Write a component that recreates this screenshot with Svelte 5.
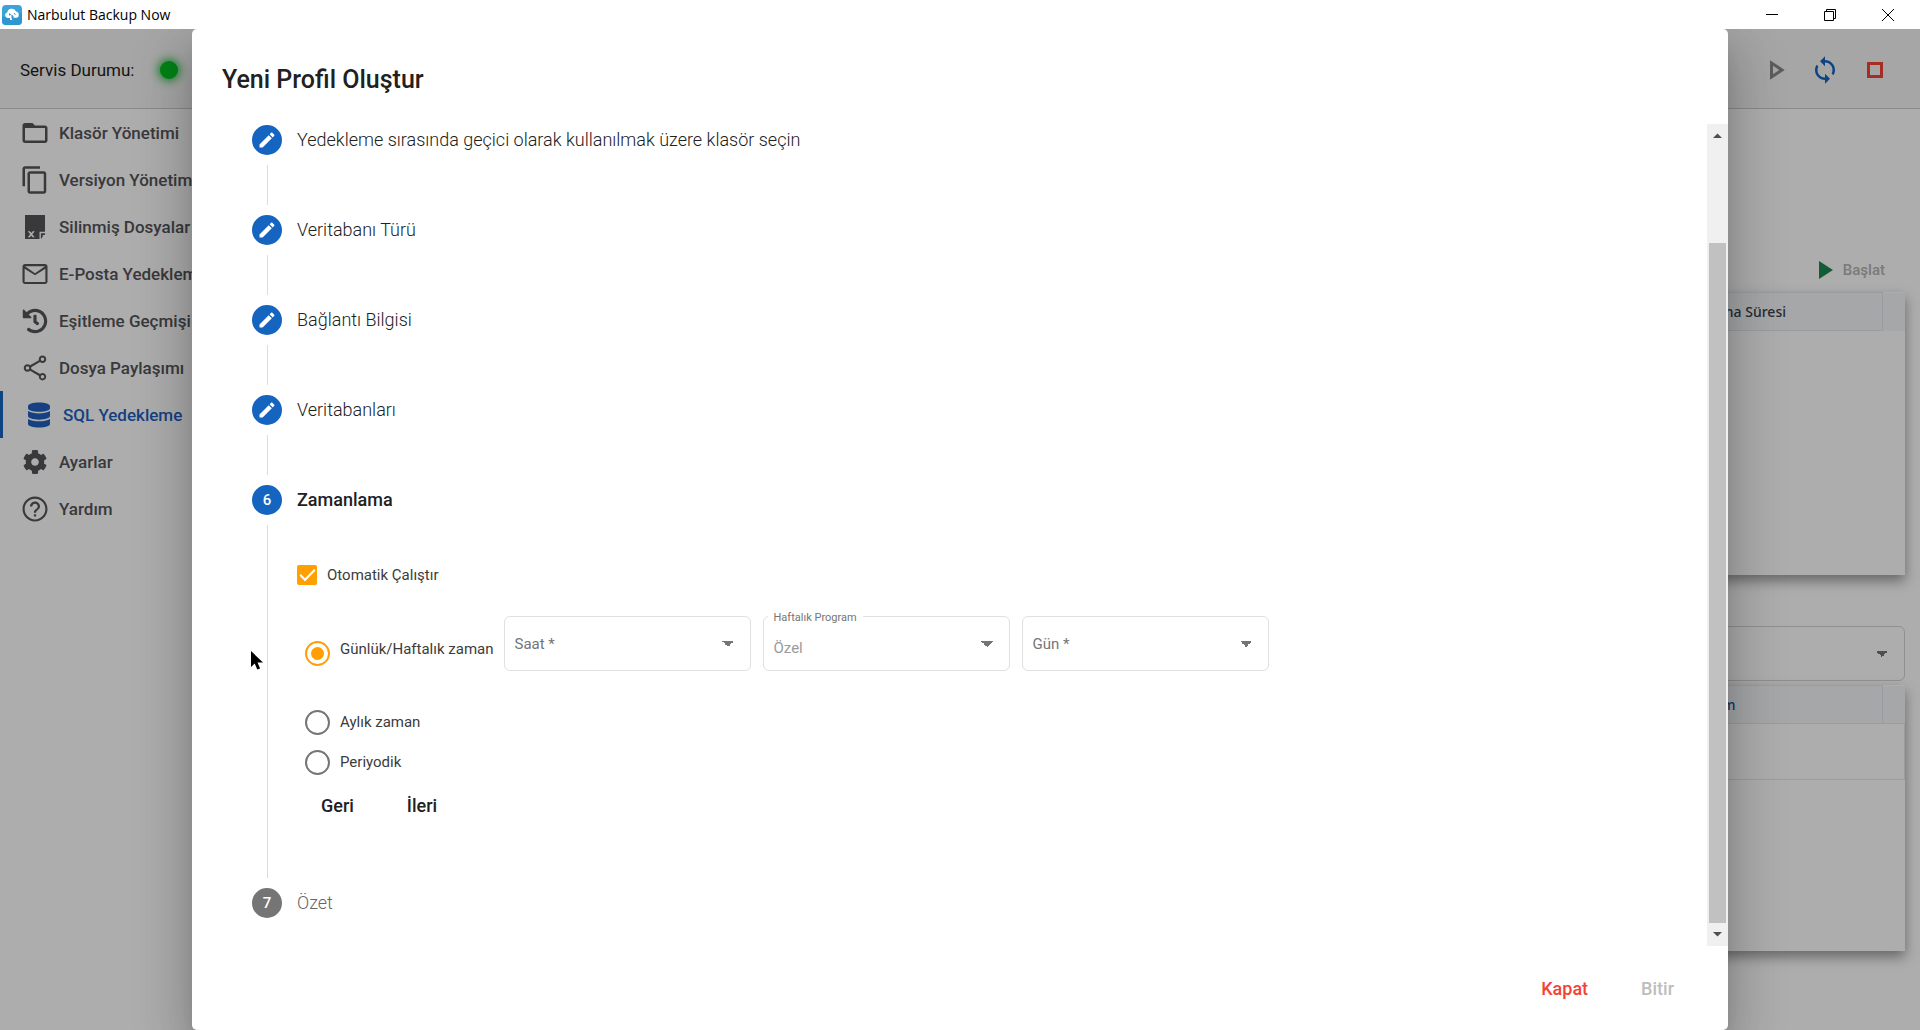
<script lang="ts">
	const menu = [
		{
			label: 'Klasör Yönetimi',
			viewBox: '0 0 24 24',
			path: 'M20 6h-8l-2-2H4c-1.1 0-2 .9-2 2v12c0 1.1.9 2 2 2h16c1.1 0 2-.9 2-2V8c0-1.1-.9-2-2-2zm0 12H4V8h16v10z'
		},
		{
			label: 'Versiyon Yönetimi',
			viewBox: '0 0 24 24',
			path: 'M16 1H4c-1.1 0-2 .9-2 2v14h2V3h12V1zm3 4H8c-1.1 0-2 .9-2 2v14c0 1.1.9 2 2 2h11c1.1 0 2-.9 2-2V7c0-1.1-.9-2-2-2zm0 16H8V7h11v14z'
		},
		{
			label: 'Silinmiş Dosyalar',
			viewBox: '0 0 24 24',
			path: 'M4 2.4h16v13.400h-4.400v5.800H4zM16.700 21.600V17H20v1.400h-1.800v1.400L16.700 21.600zM6.200 15.400l2 2.400-2 2.400h1.700l1.100-1.400 1.100 1.400h1.700l-2-2.400 2-2.400h-1.700L9 16.800l-1.100-1.400z'
		},
		{
			label: 'E-Posta Yedekleme',
			viewBox: '0 0 24 24',
			path: 'M20 4H4c-1.1 0-2 .9-2 2v12c0 1.1.9 2 2 2h16c1.1 0 2-.9 2-2V6c0-1.1-.9-2-2-2zm.3 14.300H3.700V7.700l8.300 5.300 8.300-5.300v10.600zM12 11.300 4 5.700h16L12 11.300z'
		},
		{
			label: 'Eşitleme Geçmişi',
			viewBox: '-48 -48 608 608',
			path: 'M504 255.531c.253 136.64-111.18 248.372-247.82 248.468-59.015.042-113.223-20.53-155.822-54.911-11.077-8.94-11.905-25.541-1.839-35.607l11.267-11.267c8.609-8.609 22.353-9.551 31.891-1.984C173.062 425.135 212.781 440 256 440c101.705 0 184-82.311 184-184 0-101.705-82.311-184-184-184-48.814 0-93.149 18.969-126.068 49.932l50.754 50.754c10.08 10.08 2.941 27.314-11.313 27.314H24c-8.837 0-16-7.163-16-16V38.627c0-14.254 17.234-21.393 27.314-11.314l49.372 49.372C129.209 34.136 189.552 8 256 8c136.81 0 247.747 110.78 248 247.531zm-180.912 78.784l9.823-12.63c8.138-10.463 6.253-25.542-4.21-33.679L288 256.349V152c0-13.255-10.745-24-24-24h-16c-13.255 0-24 10.745-24 24v135.651l65.409 50.874c10.463 8.137 25.541 6.253 33.679-4.21z'
		},
		{
			label: 'Dosya Paylaşımı',
			viewBox: '0 0 24 24',
			path: 'M18 16.080c-.76 0-1.440.3-1.960.77L8.910 12.700c.05-.23.09-.46.09-.7s-.04-.47-.09-.7l7.050-4.110c.54.5 1.250.81 2.040.81 1.660 0 3-1.340 3-3s-1.340-3-3-3-3 1.340-3 3c0 .24.04.47.09.7L8.040 9.810C7.500 9.310 6.790 9 6 9c-1.660 0-3 1.340-3 3s1.340 3 3 3c.79 0 1.500-.31 2.040-.81l7.120 4.160c-.05.21-.08.43-.08.65 0 1.610 1.310 2.920 2.920 2.920s2.920-1.310 2.920-2.920-1.310-2.920-2.920-2.920zM18 3.600a1.400 1.400 0 1 1 0 2.800 1.400 1.400 0 0 1 0-2.800zM6 13.400a1.400 1.400 0 1 1 0-2.800 1.400 1.400 0 0 1 0 2.800zm12 7a1.400 1.400 0 1 1 0-2.800 1.400 1.400 0 0 1 0 2.800z'
		},
		{
			label: 'SQL Yedekleme',
			active: true,
			viewBox: '-82 -50 612 612',
			path: 'M448 73.143v45.714C448 159.143 347.667 192 224 192S0 159.143 0 118.857V73.143C0 32.857 100.333 0 224 0s224 32.857 224 73.143zM448 176v102.857C448 319.143 347.667 352 224 352S0 319.143 0 278.857V176c48.125 33.143 136.208 48.572 224 48.572S399.874 209.143 448 176zm0 160v102.857C448 479.143 347.667 512 224 512S0 479.143 0 438.857V336c48.125 33.143 136.208 48.572 224 48.572S399.874 369.143 448 336z'
		},
		{
			label: 'Ayarlar',
			viewBox: '-56 -56 624 624',
			path: 'M487.400 315.700l-42.600-24.600c4.300-23.200 4.300-47 0-70.200l42.600-24.600c4.900-2.800 7.100-8.600 5.500-14-11.100-35.600-30-67.800-54.700-94.600-3.800-4.100-10-5.100-14.800-2.300L380.800 110c-17.900-15.400-38.500-27.300-60.800-35.100V25.800c0-5.600-3.900-10.500-9.400-11.700-36.700-8.200-74.300-7.800-109.200 0-5.500 1.200-9.400 6.100-9.400 11.700V75c-22.200 7.900-42.800 19.800-60.800 35.100L88.700 85.500c-4.900-2.800-11-1.900-14.800 2.300-24.700 26.700-43.600 58.900-54.700 94.600-1.700 5.400.6 11.200 5.500 14L67.300 221c-4.300 23.200-4.300 47 0 70.200l-42.600 24.600c-4.900 2.800-7.100 8.600-5.500 14 11.100 35.600 30 67.800 54.700 94.600 3.800 4.100 10 5.100 14.800 2.300l42.600-24.600c17.900 15.400 38.500 27.300 60.800 35.100v49.200c0 5.600 3.900 10.500 9.400 11.700 36.700 8.200 74.300 7.800 109.200 0 5.500-1.200 9.400-6.100 9.400-11.700v-49.200c22.200-7.900 42.800-19.800 60.800-35.100l42.600 24.600c4.900 2.800 11 1.900 14.800-2.300 24.700-26.700 43.600-58.900 54.700-94.600 1.500-5.500-.7-11.300-5.600-14.100zM256 336c-44.100 0-80-35.900-80-80s35.900-80 80-80 80 35.900 80 80-35.900 80-80 80z'
		},
		{
			label: 'Yardım',
			viewBox: '0 0 24 24',
			path: 'M11.100 18h1.800v-1.800h-1.800V18zM12 2C6.480 2 2 6.480 2 12s4.480 10 10 10 10-4.480 10-10S17.520 2 12 2zm0 18.300c-4.600 0-8.300-3.700-8.300-8.300S7.400 3.700 12 3.700s8.300 3.700 8.300 8.300-3.700 8.300-8.300 8.300zM12 6c-2.210 0-4 1.790-4 4h1.800c0-1.200 1-2.200 2.200-2.200s2.200 1 2.200 2.200c0 2-3.100 1.900-3.100 5h1.800c0-2.250 3.100-2.500 3.100-5 0-2.210-1.790-4-4-4z'
		}
	];

	const doneSteps = [
		'Yedekleme sırasında geçici olarak kullanılmak üzere klasör seçin',
		'Veritabanı Türü',
		'Bağlantı Bilgisi',
		'Veritabanları'
	];

	let autoRun = $state(true);
	let schedule = $state('daily');
</script>

{#snippet radio(value: string, label: string)}
	<label class="radio">
		<input type="radio" name="schedule" {value} bind:group={schedule} />
		<span>{label}</span>
	</label>
{/snippet}

<div class="window">
	<div class="titlebar">
		<svg class="logo" viewBox="0 0 20 20" aria-hidden="true">
			<rect width="20" height="20" rx="4" fill="#3ba3d8" />
			<path d="M0 12 20 8v8a4 4 0 0 1-4 4H4a4 4 0 0 1-4-4z" fill="#2f97cf" />
			<path d="M5.500 13a2.800 2.800 0 0 1-.3-5.500 4.800 4.800 0 0 1 9-1 3.300 3.300 0 0 1 .6 6.300h-3.300V11l-2-1.500v4l1 1.500H8v-2z" fill="#fff" />
			<path d="M7.500 10.500v-2l2 2M12 8l1.500 2" fill="none" stroke="#3ba3d8" />
		</svg>
		<span class="app-name">Narbulut Backup Now</span>
		<button aria-label="Küçült">
			<svg viewBox="0 0 12 12"><path d="M0 5.500h12" /></svg>
		</button>
		<button aria-label="Geri yükle">
			<svg viewBox="0 0 12 12"><path d="M.5 2.500h9v9h-9zM2.500 2.500v-2h9v9h-2" /></svg>
		</button>
		<button aria-label="Kapat">
			<svg viewBox="0 0 12 12"><path d="M0 0l12 12M12 0 0 12" /></svg>
		</button>
	</div>

	<header>
		<span>Servis Durumu:</span>
		<i class="status"></i>
		<div class="tools">
			<button aria-label="Başlat">
				<svg viewBox="0 0 30 30"><path d="M11.500 8v14L22 15z" fill="none" stroke="#8a8a8a" stroke-width="3" /></svg>
			</button>
			<button aria-label="Yenile">
				<svg viewBox="0 0 24 24">
					<path fill="#1565c0" d="M12 4V1L8 5l4 4V6c3.310 0 6 2.690 6 6 0 1.010-.25 1.970-.7 2.800l1.460 1.460C19.540 15.030 20 13.570 20 12c0-4.420-3.580-8-8-8zm0 14c-3.310 0-6-2.690-6-6 0-1.010.25-1.970.7-2.800L5.240 7.740C4.460 8.970 4 10.430 4 12c0 4.420 3.580 8 8 8v3l4-4-4-4v3z" />
				</svg>
			</button>
			<button aria-label="Durdur">
				<svg viewBox="0 0 30 30"><path d="M8.500 8.500h13v13h-13z" fill="none" stroke="#f44336" stroke-width="3" /></svg>
			</button>
		</div>
	</header>

	<div class="page">
		<nav>
			{#each menu as item}
				<a href="#top" class:active={item.active}>
					<svg viewBox={item.viewBox}><path d={item.path} fill-rule="evenodd" /></svg>
					{item.label}
				</a>
			{/each}
		</nav>

		<main>
			<button class="start" disabled>
				<svg viewBox="0 0 14 18"><path d="M0 0v18l14-9z" /></svg>
				Başlat
			</button>
			<div class="card">
				<table>
					<thead>
						<tr><th>Çalışma Süresi</th><td></td></tr>
					</thead>
				</table>
			</div>
			<select class="filter" aria-label="Profil"><option></option></select>
			<div class="card second">
				<table>
					<thead>
						<tr><th>Durum</th><td></td></tr>
					</thead>
					<tbody>
						<tr><td colspan="2"></td></tr>
					</tbody>
				</table>
			</div>
		</main>
	</div>

	<div class="backdrop">
		<div class="dialog" role="dialog" aria-labelledby="dialog-title">
			<h2 id="dialog-title">Yeni Profil Oluştur</h2>

			<div class="scroll">
				<div class="stepper">
					{#each doneSteps as step}
						<div class="step">
							<span class="circle">
								<svg viewBox="0 0 24 24">
									<path d="M3 17.250V21h3.750L17.810 9.940l-3.750-3.750L3 17.250zM20.710 7.040c.39-.39.39-1.020 0-1.410l-2.340-2.340c-.39-.39-1.020-.39-1.410 0l-1.830 1.830 3.750 3.750 1.830-1.830z" />
								</svg>
							</span>
							<span class="name">{step}</span>
						</div>
						<div class="line"></div>
					{/each}

					<div class="step current">
						<span class="circle">6</span>
						<span class="name">Zamanlama</span>
					</div>
					<form class="line content">
						<label class="check">
							<input type="checkbox" bind:checked={autoRun} />
							<span>Otomatik Çalıştır</span>
						</label>

						<div class="daily">
							{@render radio('daily', 'Günlük/Haftalık zaman')}
							<div class="fields">
								<div class="field">
									<label for="hour">Saat *</label>
									<select id="hour"><option></option></select>
								</div>
								<div class="field filled">
									<label for="program">Haftalık Program</label>
									<select id="program"><option>Özel</option></select>
								</div>
								<div class="field">
									<label for="day">Gün *</label>
									<select id="day"><option></option></select>
								</div>
							</div>
						</div>

						{@render radio('monthly', 'Aylık zaman')}
						{@render radio('periodic', 'Periyodik')}

						<div class="step-actions">
							<button type="button">Geri</button>
							<button type="button">İleri</button>
						</div>
					</form>

					<div class="step pending">
						<span class="circle">7</span>
						<span class="name">Özet</span>
					</div>
				</div>

				<div class="scrollbar" aria-hidden="true">
					<svg viewBox="0 0 21 21"><path d="M6 14h9l-4.500-4.500z" /></svg>
					<div class="track"><div class="thumb"></div></div>
					<svg viewBox="0 0 21 21"><path d="M6 7h9l-4.500 4.500z" /></svg>
				</div>
			</div>

			<footer>
				<button class="close">Kapat</button>
				<button disabled>Bitir</button>
			</footer>
		</div>
	</div>

	<svg class="cursor" viewBox="0 0 12 19" aria-hidden="true">
		<path d="M0 0v16l3.700-3.400 2.600 6 2.800-1.200-2.600-5.800H12z" />
	</svg>
</div>

<style>
	:global(body) {
		font-family: Roboto, sans-serif;
		font-size: 18px;
		color: #212121;
		overflow: hidden;
	}

	.window {
		position: relative;
		display: flex;
		flex-direction: column;
		height: 100vh;
		overflow: hidden;
	}

	button {
		border: 0;
		padding: 0;
		background: none;
		font: inherit;
		color: inherit;
	}

	.titlebar {
		display: flex;
		align-items: center;
		flex: none;
		height: 29px;
		padding: 0 3px 0 2px;
		background: white;
	}

	.logo {
		width: 20px;
		height: 20px;
	}

	.app-name {
		flex: 1;
		margin-left: 5px;
		font-family: 'Open Sans', sans-serif;
		font-size: 14px;
		color: black;
	}

	.titlebar button {
		width: 58px;
		height: 28px;
	}

	.titlebar button svg {
		width: 12px;
		height: 12px;
		fill: none;
		stroke: black;
	}

	header {
		display: flex;
		align-items: center;
		flex: none;
		box-sizing: border-box;
		height: 80px;
		padding: 2px 30px 0 20px;
		border-bottom: 1px solid #ccc;
		background: #f5f5f5;
		font-size: 17px;
	}

	.status {
		width: 18px;
		height: 18px;
		margin-left: 26px;
		border-radius: 50%;
		background: #00c01f;
		box-shadow: 0 0 10px 2px #2fc047;
	}

	.tools {
		display: flex;
		gap: 20px;
		margin-left: auto;
	}

	.tools svg {
		display: block;
		width: 30px;
		height: 30px;
	}

	.page {
		display: flex;
		flex: 1;
		background: white;
	}

	nav {
		width: 260px;
	}

	nav a {
		display: flex;
		align-items: center;
		gap: 9px;
		height: 47px;
		padding-left: 20px;
		font-size: 17px;
		font-weight: 500;
		color: #555559;
		text-decoration: none;
		white-space: nowrap;
	}

	nav a.active {
		padding-left: 21px;
		border-left: 3px solid #1565c0;
		color: #1f5fc0;
	}

	nav svg {
		width: 30px;
		height: 30px;
		fill: currentColor;
	}

	main {
		display: flex;
		flex-direction: column;
		flex: 1;
		padding: 145px 15px 0 40px;
	}

	.start {
		display: flex;
		align-items: center;
		align-self: flex-end;
		gap: 10px;
		height: 32px;
		margin-right: 20px;
		font-size: 15px;
		font-weight: 500;
		color: #b4b4b4;
	}

	.start svg {
		width: 14px;
		height: 18px;
		fill: #1b8a52;
	}

	.card {
		height: 283px;
		margin-top: 6px;
		background: white;
		box-shadow: 0 6px 12px rgba(0, 0, 0, 0.4);
	}

	.card.second {
		height: 266px;
		margin-top: 4px;
	}

	table {
		width: 100%;
		border-collapse: collapse;
	}

	thead tr {
		height: 38px;
		background: #f5f7fa;
	}

	th {
		padding: 0 96px 0 0;
		border: 1px solid #e4e8ec;
		font-family: 'Noto Sans', sans-serif;
		font-size: 14px;
		font-weight: 500;
		text-align: right;
		color: #3c4048;
	}

	.second th {
		padding-right: 146px;
		color: #1f4f96;
	}

	thead td {
		width: 22px;
		padding: 0;
	}

	tbody td {
		height: 55px;
		padding: 0;
		border: 1px solid #e4e8ec;
	}

	select {
		appearance: none;
		box-sizing: border-box;
		width: 100%;
		height: 55px;
		padding: 8px 10px 0;
		border: 1px solid #e0e0e0;
		border-radius: 6px;
		background-color: transparent;
		background-image: linear-gradient(45deg, transparent 50%, #757575 50%), linear-gradient(-45deg, transparent 50%, #757575 50%);
		background-position: right 22px center, right 16px center;
		background-size: 6px 6px;
		background-repeat: no-repeat;
		font: inherit;
		color: #9a9a9a;
	}

	.filter {
		flex: none;
		margin-top: 51px;
		border-color: #d5d5d5;
	}

	.backdrop {
		position: absolute;
		inset: 29px 0 0;
		display: flex;
		justify-content: center;
		overflow: hidden;
		background: rgba(0, 0, 0, 0.32);
	}

	.dialog {
		display: flex;
		flex-direction: column;
		width: 80%;
		border-radius: 5px;
		background: white;
		box-shadow:
			0 14px 19px -9px rgba(0, 0, 0, 0.2),
			0 30px 48px 4px rgba(0, 0, 0, 0.14),
			0 11px 58px 10px rgba(0, 0, 0, 0.12);
	}

	h2 {
		margin: 0;
		padding: 31px 30px 24px;
		font-size: 25px;
		font-weight: 500;
		line-height: 40px;
	}

	.scroll {
		display: flex;
		flex: 1;
		min-height: 0;
	}

	.stepper {
		flex: 1;
		padding: 1px 30px 0 60px;
		overflow: hidden;
	}

	.step {
		display: flex;
		gap: 15px;
		height: 30px;
		font-weight: 300;
		line-height: 29px;
		color: #212121;
	}

	.circle {
		display: flex;
		align-items: center;
		justify-content: center;
		width: 30px;
		height: 30px;
		border-radius: 50%;
		background: #1565c0;
		font-size: 15px;
		font-weight: 500;
		color: white;
	}

	.circle svg {
		width: 20px;
		height: 20px;
		fill: white;
	}

	.current .name {
		font-weight: 500;
	}

	.pending {
		color: #666;
	}

	.pending .circle {
		background: #757575;
	}

	.line {
		height: 40px;
		margin: 10px 0 10px 15px;
		border-left: 1px solid #dcdcdc;
	}

	.content {
		height: auto;
		padding: 35px 0 50px 29px;
		font-size: 15px;
		color: #3c3c3c;
	}

	.check {
		display: flex;
		align-items: center;
		gap: 10px;
		height: 30px;
		margin-bottom: 26px;
	}

	.check input {
		appearance: none;
		width: 20px;
		height: 20px;
		margin: 0;
		border: 2px solid #757575;
		border-radius: 2px;
	}

	.check input:checked {
		display: grid;
		place-items: center;
		border: 0;
		background: #ffa000;
	}

	.check input:checked::before {
		content: '';
		width: 15px;
		height: 8px;
		margin-bottom: 5px;
		border: solid white;
		border-width: 0 0 2px 2px;
		box-sizing: border-box;
		transform: rotate(-45deg);
	}

	.radio {
		display: flex;
		align-items: center;
		gap: 10px;
		height: 40px;
		padding-left: 8px;
		white-space: nowrap;
	}

	.radio input {
		appearance: none;
		display: grid;
		place-items: center;
		width: 25px;
		height: 25px;
		margin: 0;
		border: 2px solid #757575;
		border-radius: 50%;
	}

	.radio input:checked {
		border-color: #ffa000;
	}

	.radio input:checked::before {
		content: '';
		width: 13px;
		height: 13px;
		border-radius: 50%;
		background: #ffa000;
	}

	.daily {
		display: flex;
		align-items: flex-end;
		gap: 10px;
		margin-bottom: 31px;
	}

	.daily .radio {
		align-items: flex-end;
		padding-bottom: 5px;
		line-height: 33px;
	}

	.fields {
		display: flex;
		gap: 12px;
	}

	.field {
		position: relative;
		width: 247px;
	}

	.field select {
		display: block;
	}

	.field label {
		position: absolute;
		top: 18px;
		left: 11px;
		line-height: 20px;
		color: #757575;
	}

	.filled label {
		top: -4px;
		left: 5px;
		padding: 0 6px;
		background: white;
		font-size: 11px;
		line-height: 12px;
	}

	.step-actions {
		display: flex;
		gap: 53px;
		height: 46px;
		padding-left: 24px;
		font-size: 18px;
		font-weight: 500;
		color: #212121;
	}

	.scrollbar {
		display: flex;
		flex-direction: column;
		width: 21px;
		background: #f0f0f0;
	}

	.scrollbar svg {
		width: 21px;
		height: 21px;
		fill: #505050;
	}

	.track {
		display: flex;
		flex: 1;
		align-items: flex-end;
		padding: 0 2px 2px;
	}

	.thumb {
		flex: 1;
		height: 87.4%;
		background: #c1c1c1;
	}

	footer {
		display: flex;
		align-items: center;
		justify-content: flex-end;
		gap: 53px;
		height: 84px;
		padding-right: 54px;
		font-weight: 500;
	}

	footer .close {
		color: #f44336;
	}

	footer button:disabled {
		color: #bdbdbd;
	}

	.cursor {
		position: absolute;
		top: 651px;
		left: 251px;
		width: 12px;
		height: 19px;
	}
</style>
